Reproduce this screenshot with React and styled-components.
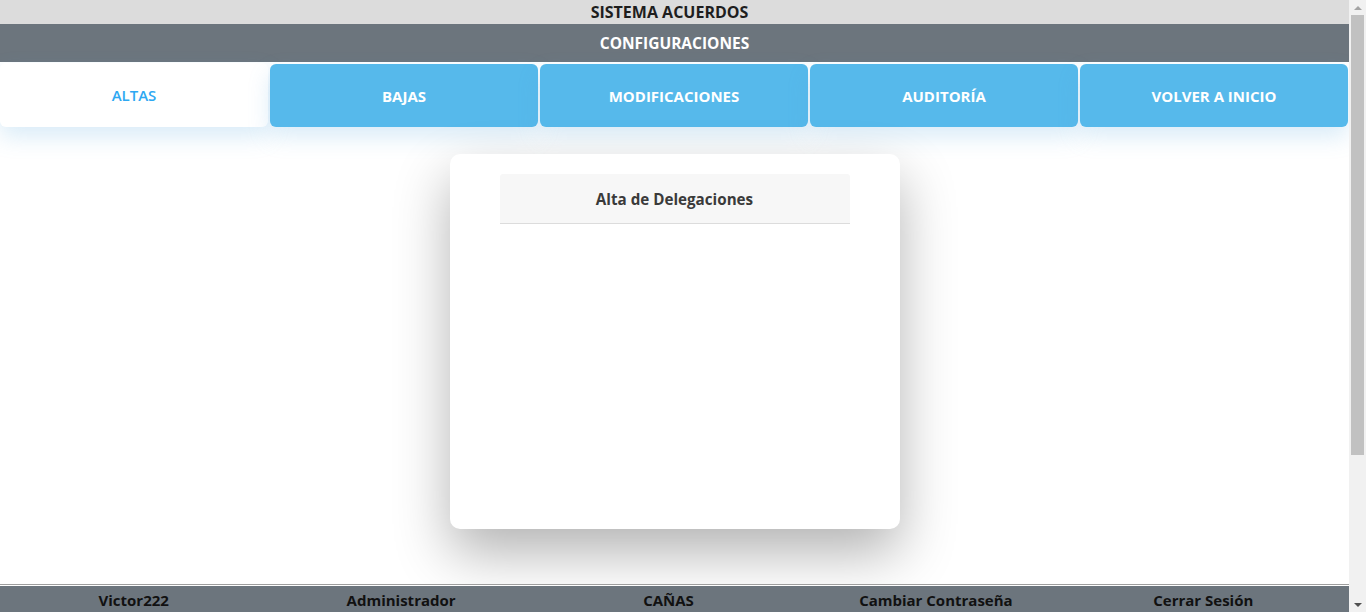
import React from "react";
import styled, { createGlobalStyle } from "styled-components";

const GlobalStyle = createGlobalStyle`
  html, body {
    margin: 0;
    padding: 0;
    background: #ffffff;
    font-family: "Open Sans", "Noto Sans", sans-serif;
    overflow: hidden;
  }
  * {
    box-sizing: border-box;
  }
`;

const tabs = ["ALTAS", "BAJAS", "MODIFICACIONES", "AUDITORÍA", "VOLVER A INICIO"];
const footerItems = ["Victor222", "Administrador", "CAÑAS", "Cambiar Contraseña", "Cerrar Sesión"];

const App = () => {
  return (
    <Window>
      <GlobalStyle />
      <Viewport>
        <Page>
          <TopBar>SISTEMA ACUERDOS</TopBar>
          <SectionBar>CONFIGURACIONES</SectionBar>
          <TabRow>
            {tabs.map((t, i) => (
              <Tab key={t} $active={i === 0}>
                {t}
              </Tab>
            ))}
          </TabRow>
          <Main>
            <Card>
              <CardHeader>Alta de Delegaciones</CardHeader>
            </Card>
          </Main>
          <Footer>
            <FooterBand>
              {footerItems.map((f) => (
                <FooterItem key={f}>{f}</FooterItem>
              ))}
            </FooterBand>
          </Footer>
        </Page>
      </Viewport>
      {/* page scrollbar */}
      <ScrollRail>
        <ScrollButton>
          <Arrow $dir="up" />
        </ScrollButton>
        <ScrollTrack>
          <ScrollThumb />
        </ScrollTrack>
        <ScrollButton>
          <Arrow $dir="down" />
        </ScrollButton>
      </ScrollRail>
    </Window>
  );
};

const Window = styled.div`
  height: 100vh;
  display: flex;
`;

const Viewport = styled.div`
  flex: 1;
  min-width: 0;
  overflow: hidden;
`;

const ScrollRail = styled.aside`
  width: 17px;
  flex: none;
  background: #f1f1f1;
  display: flex;
  flex-direction: column;
`;

const ScrollButton = styled.div`
  height: 15px;
  display: flex;
  align-items: center;
  justify-content: center;
`;

const Arrow = styled.span`
  width: 0;
  height: 0;
  border-left: 4px solid transparent;
  border-right: 4px solid transparent;
  ${(p) =>
    p.$dir === "up"
      ? "border-bottom: 4px solid #a3a3a3;"
      : "border-top: 4px solid #505050;"}
`;

const ScrollTrack = styled.div`
  flex: 1;
  padding: 0 2px;
`;

const ScrollThumb = styled.div`
  height: 440px;
  background: #c1c1c1;
`;

const Page = styled.div`
  min-height: 100vh;
  display: flex;
  flex-direction: column;
`;

const TopBar = styled.div`
  height: 24px;
  background: #dcdcdc;
  color: #1e1e1e;
  font-weight: 700;
  font-size: 16px;
  display: flex;
  align-items: center;
  justify-content: center;
  padding-right: 10px;
`;

const SectionBar = styled.div`
  height: 38px;
  background: #6c757d;
  color: #ffffff;
  font-weight: 700;
  font-size: 15.5px;
  display: flex;
  align-items: center;
  justify-content: center;
`;

const TabRow = styled.nav`
  display: flex;
  gap: 2px;
  padding: 2px 1px 0 0;
`;

const Tab = styled.div`
  flex: 1;
  margin-top: ${(p) => (p.$active ? "-1px" : "0")};
  height: ${(p) => (p.$active ? "64px" : "63px")};
  border-radius: 6px;
  background: ${(p) => (p.$active ? "#ffffff" : "#56b9eb")};
  color: ${(p) => (p.$active ? "#2ea8f2" : "#ffffff")};
  font-weight: ${(p) => (p.$active ? 600 : 700)};
  font-size: 15px;
  display: flex;
  align-items: center;
  justify-content: center;
  box-shadow: 0 10px 22px rgba(86, 170, 225, 0.22);
`;

const Main = styled.main`
  flex: 1;
  display: flex;
  justify-content: center;
  align-items: flex-start;
  padding-top: 27px;
`;

const Card = styled.section`
  width: 450px;
  height: 375px;
  background: #ffffff;
  border-radius: 10px;
  box-shadow: 0 24px 55px rgba(0, 0, 0, 0.3);
  padding: 20px 50px;
`;

const CardHeader = styled.div`
  height: 50px;
  background: #f7f7f7;
  border-bottom: 1px solid #dcdcdc;
  border-radius: 3px 3px 0 0;
  display: flex;
  align-items: center;
  justify-content: center;
  color: #3a3a3a;
  font-weight: 700;
  font-size: 15.2px;
`;

const Footer = styled.footer`
  position: sticky;
  bottom: 0;
  margin-top: auto;
  border-top: 1px solid #9e9e9e;
  background: #ffffff;
  padding-top: 1px;
`;

const FooterBand = styled.div`
  height: 26px;
  background: #6c757d;
  display: grid;
  grid-template-columns: repeat(5, 1fr);
  align-items: center;
  padding-right: 12px;
`;

const FooterItem = styled.div`
  text-align: center;
  color: #111111;
  font-weight: 700;
  font-size: 15px;
  padding-top: 2px;
`;

export default App;
